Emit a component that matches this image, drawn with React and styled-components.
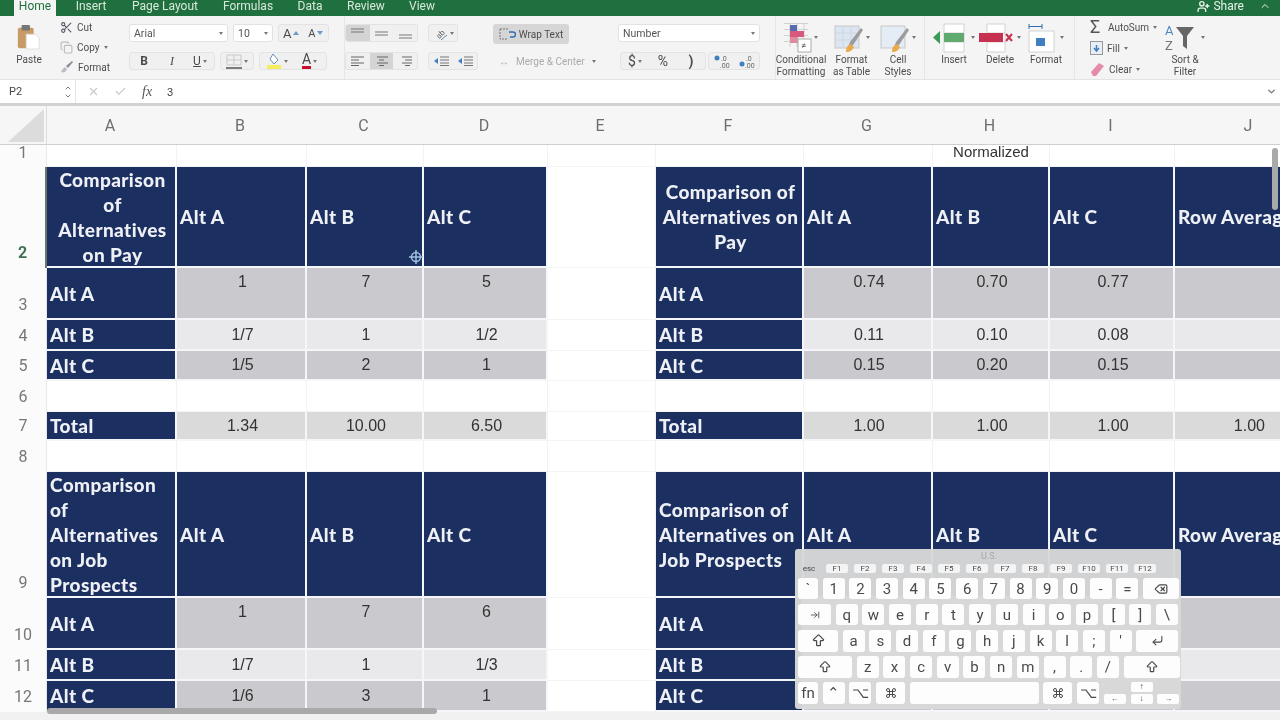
import React from 'react';
import styled, { createGlobalStyle } from 'styled-components';
import { Scissors, Copy, ChevronUp, ChevronDown, X, Check, UserPlus, Delete, Command, ArrowBigUp, CornerDownLeft, ArrowRightToLine } from 'lucide-react';

const Global = createGlobalStyle`
    html, body { margin: 0; padding: 0; background: #fff; overflow: hidden; }
    * { box-sizing: border-box; }
`;

const Page = styled.div`
    position: relative;
    width: 1280px;
    height: 720px;
    overflow: hidden;
    background: #f1f1f1;
    font-family: 'Liberation Sans', Arial, sans-serif;
    filter: blur(0.45px);
`;

/* top tabs */
const TabBar = styled.div`
    height: 16px;
    background: #20703f;
    display: flex;
    align-items: flex-start;
    font-family: Roboto, 'Liberation Sans', sans-serif;
    font-size: 12px;
    line-height: 12px;
    color: #d9e8dd;
`;
const Tab = styled.div`
    width: ${(p) => p.$w}px;
    margin-left: ${(p) => p.$ml}px;
    height: 16px;
    text-align: center;
    background: ${(p) => (p.$active ? '#f4f4f4' : 'transparent')};
    color: ${(p) => (p.$active ? '#20703f' : 'inherit')};
`;
const Share = styled.div`
    margin-left: auto;
    margin-right: 9px;
    display: flex;
    align-items: center;
    height: 12px;
    gap: 3px;
    color: #e8f1ea;
`;

/* ribbon */
const Ribbon = styled.div`
    height: 64px;
    display: flex;
    background: #f4f4f4;
    border-bottom: 1px solid #e4e4e4;
    font-family: Roboto, 'Liberation Sans', sans-serif;
    font-size: 10px;
    color: #4d4d4d;
`;
const Section = styled.div`
    width: ${(p) => p.$w}px;
    flex: none;
    display: flex;
    flex-direction: ${(p) => (p.$row ? 'row' : 'column')};
    padding-left: ${(p) => p.$pl || 0}px;
    padding-top: ${(p) => (p.$row ? 0 : 8)}px;
    gap: ${(p) => (p.$row ? 0 : 10)}px;
    border-right: ${(p) => (p.$sep ? '1px solid #e6e6e6' : 'none')};
`;
const Line = styled.div`
    display: flex;
    height: 18px;
    gap: ${(p) => p.$gap ?? 5}px;
    align-items: stretch;
`;
const Field = styled.div`
    width: ${(p) => p.$w}px;
    background: #fff;
    border: 1px solid #e2e2e2;
    border-radius: 3px;
    display: flex;
    align-items: center;
    justify-content: space-between;
    padding: 0 4px;
    font-size: 10.5px;
    color: #555;
`;
const Caret = styled.span`
    width: 0;
    height: 0;
    flex: none;
    border-left: 2px solid transparent;
    border-right: 2px solid transparent;
    border-top: 3px solid #777;
`;
const SizeTri = styled.span`
    width: 0;
    height: 0;
    flex: none;
    border-left: 3px solid transparent;
    border-right: 3px solid transparent;
    border-top: ${(p) => (p.$up ? 'none' : '4px solid #6d98c7')};
    border-bottom: ${(p) => (p.$up ? '4px solid #6d98c7' : 'none')};
`;
const Group = styled.div`
    width: ${(p) => p.$w}px;
    flex: none;
    margin-left: ${(p) => p.$ml || 0}px;
    display: flex;
    background: #f0f0f0;
    border: 1px solid #e3e3e3;
    border-radius: 3px;
    overflow: hidden;
`;
const GroupBtn = styled.div`
    flex: 1;
    display: flex;
    align-items: center;
    justify-content: center;
    gap: 2px;
    font-size: ${(p) => p.$fs || 12}px;
    color: #4a4a4a;
    background: ${(p) => (p.$on ? '#d4d4d4' : 'transparent')};
`;
const BoldBtn = styled(GroupBtn)`
    font-weight: 700;
`;
const ItalicBtn = styled(GroupBtn)`
    font-style: italic;
    font-family: 'Liberation Serif', serif;
`;
const UnderBtn = styled(GroupBtn)`
    text-decoration: underline;
`;
const ColorA = styled.span`
    border-bottom: 4px solid #c8102e;
    line-height: 13px;
    font-size: 14px;
`;
const Clip = styled.div`
    display: flex;
    flex-direction: column;
    align-items: center;
    width: 36px;
    margin-left: 11px;
    padding-top: 8px;
`;
const ClipLabel = styled.div`
    margin-top: 4px;
    font-size: 10px;
    line-height: 12px;
`;
const ClipList = styled.div`
    display: flex;
    flex-direction: column;
    margin-left: ${(p) => p.$ml ?? 13}px;
    padding-top: 4px;
    gap: ${(p) => p.$gap ?? 6}px;
`;
const ClipRow = styled.div`
    display: flex;
    align-items: center;
    height: 14px;
    gap: 4px;
    white-space: nowrap;
`;
const Sigma = styled.span`
    width: 14px;
    font-size: 18px;
    line-height: 14px;
    color: #555;
`;
const Wrap = styled.div`
    width: 76px;
    height: 20px;
    background: #d6d6d6;
    border-radius: 3px;
    display: flex;
    align-items: center;
    justify-content: center;
    gap: 3px;
    font-size: 10px;
`;
const Merge = styled.div`
    height: 18px;
    display: flex;
    align-items: center;
    gap: 7px;
    margin-left: 6px;
    margin-top: -2px;
    font-size: 10px;
    color: #ababab;
`;
const Big = styled.div`
    width: ${(p) => p.$w}px;
    flex: none;
    display: flex;
    flex-direction: column;
    align-items: center;
    padding-top: 5px;
`;
const BigIcon = styled.div`
    height: 33px;
    display: flex;
    align-items: center;
    gap: 2px;
`;
const BigLabel = styled.div`
    text-align: center;
    font-size: 10px;
    line-height: 12px;
    white-space: nowrap;
`;

/* formula bar */
const FormulaBar = styled.div`
    height: 26px;
    display: flex;
    align-items: center;
    background: #fff;
    border-bottom: 3px solid #d2d2d2;
    font-size: 11px;
    color: #444;
`;
const NameBox = styled.div`
    width: 76px;
    height: 100%;
    padding-left: 9px;
    display: flex;
    align-items: center;
    justify-content: space-between;
    padding-right: 3px;
    border-right: 1px solid #e4e4e4;
    font-family: Roboto, sans-serif;
`;
const Stepper = styled.div`
    display: flex;
    flex-direction: column;
    color: #777;
`;
const FormulaIcons = styled.div`
    width: 91px;
    height: 16px;
    display: flex;
    align-items: center;
    padding-left: 11px;
    gap: 14px;
    color: #c7c7c7;
`;
const Fx = styled.span`
    font-family: 'Liberation Serif', serif;
    font-style: italic;
    font-size: 14px;
    color: #555;
    margin-left: 1px;
`;
const FormulaValue = styled.div`
    flex: 1;
    display: flex;
    justify-content: space-between;
    align-items: center;
    padding-right: 3px;
`;

/* sheet */
const columns = [47, 130, 130, 117, 124, 108, 148, 129, 117, 125, 150];

const Sheet = styled.div`
    display: grid;
    grid-template-columns: ${columns.map((c) => c + 'px').join(' ')};
    grid-template-rows: ${(p) => p.$rows};
    height: 614px;
    overflow: hidden;
`;
const Corner = styled.div`
    background: #f6f6f6;
    border-bottom: 1px solid #cfcfcf;
    border-right: 1px solid #dcdcdc;
    display: flex;
    justify-content: flex-end;
    padding: 3px 2px 2px 0;
`;
const ColHead = styled.div`
    background: #f6f6f6;
    border-bottom: 1px solid #cfcfcf;
    display: flex;
    align-items: center;
    justify-content: center;
    padding-right: 4px;
    font-family: Roboto, sans-serif;
    font-size: 16px;
    color: #6e6e6e;
`;
const RowHead = styled.div`
    display: flex;
    align-items: ${(p) => (p.$top ? 'flex-start' : 'flex-end')};
    justify-content: center;
    line-height: 16px;
    padding-bottom: ${(p) => (p.$top ? 0 : 7)}px;
    font-family: Roboto, sans-serif;
    font-size: 16px;
    color: ${(p) => (p.$active ? '#3f7353' : '#777')};
    font-weight: ${(p) => (p.$active ? 700 : 400)};
    background: #fbfbfb;
    border-right: ${(p) => (p.$active ? '2px solid #66786c' : '1px solid #e9e9e9')};
`;
const cellBg = { navy: '#1b2f60', gray: '#cacace', light: '#e9e9ec', total: '#dadadb', blank: '#fff' };
const Cell = styled.div`
    display: flex;
    position: relative;
    white-space: pre-line;
    background: ${(p) => cellBg[p.$k]};
    border-right: ${(p) => (p.$k === 'blank' ? '1px solid #f2f2f2' : '2px solid #f4f6fa')};
    border-bottom: ${(p) => (p.$k === 'blank' ? '1px solid #f4f4f4' : '2px solid #f4f6fa')};
`;
const Head = styled(Cell)`
    align-items: center;
    justify-content: ${(p) => (p.$center ? 'center' : 'flex-start')};
    text-align: ${(p) => (p.$center ? 'center' : 'left')};
    padding-left: 3px;
    font-family: Lato, 'Open Sans', sans-serif;
    font-weight: 900;
    font-size: 19px;
    letter-spacing: 0.4px;
    line-height: 25px;
    color: #eef0f5;
    white-space: pre-line;
`;
const Num = styled(Cell)`
    justify-content: ${(p) => (p.$right ? 'flex-end' : 'center')};
    align-items: ${(p) => (p.$top ? 'flex-start' : 'center')};
    padding-top: ${(p) => (p.$top ? 5 : 0)}px;
    padding-right: ${(p) => (p.$right ? 58 : 0)}px;
    padding-left: 3px;
    font-size: 16px;
    color: #333;
`;
const Floating = styled.div`
    position: absolute;
    top: 0;
    left: 50%;
    transform: translate(-50%, -1px);
    font-size: 15px;
    line-height: 16px;
    color: #333;
    white-space: nowrap;
`;

const Thumb = styled.div`
    position: absolute;
    background: #a9a9a9;
    border-radius: 3px;
`;
const VThumb = styled(Thumb)`
    right: 2px;
    top: 148px;
    width: 6px;
    height: 62px;
`;
const HThumb = styled(Thumb)`
    left: 47px;
    bottom: 6px;
    width: 390px;
    height: 6px;
`;
const CursorMark = styled.div`
    position: absolute;
    left: 409px;
    top: 250px;
    width: 14px;
    height: 14px;
`;

/* on-screen keyboard */
const Keyboard = styled.div`
    position: absolute;
    left: 795px;
    top: 549px;
    width: 386px;
    height: 160px;
    padding: 0 1px 0 3px;
    background: rgba(216, 216, 216, 0.97);
    border-radius: 3px;
    display: flex;
    flex-direction: column;
    font-family: Roboto, 'Liberation Sans', sans-serif;
    color: #4a4a4a;
`;
const KbTitle = styled.div`
    height: 14px;
    line-height: 14px;
    text-align: center;
    font-size: 9px;
    color: #a8a8a8;
`;
const FnRow = styled.div`
    display: flex;
    height: 9px;
    gap: 6px;
    margin-top: 1px;
    margin-bottom: 5px;
`;
const FnKey = styled.div`
    width: 22px;
    height: 9px;
    background: ${(p) => (p.$plain ? 'transparent' : '#f4f4f4')};
    border-radius: 2px;
    font-size: 8px;
    line-height: 9px;
    text-align: center;
`;
const KeyRow = styled.div`
    display: flex;
    gap: 4.7px;
    height: 22px;
    margin-bottom: 4.7px;
`;
const Key = styled.div`
    width: ${(p) => p.$w || 22}px;
    flex: none;
    height: 100%;
    background: #fdfdfd;
    border-radius: 3px;
    display: flex;
    align-items: center;
    justify-content: center;
    font-size: 15px;
`;
const ArrowCol = styled.div`
    width: 22px;
    flex: none;
    display: flex;
    flex-direction: column;
    justify-content: ${(p) => (p.$low ? 'flex-end' : 'space-between')};
    gap: 2px;
`;
const ArrowKey = styled.div`
    height: 10px;
    background: #fdfdfd;
    border-radius: 2px;
    display: flex;
    align-items: center;
    justify-content: center;
    font-size: 8px;
    line-height: 10px;
`;

/* ribbon drawings */
const PasteIcon = () => (
    <svg width="24" height="26" viewBox="0 0 24 28">
        <rect x="0" y="4" width="17" height="22" rx="2" fill="#c89a66" />
        <rect x="4" y="1" width="9" height="6" rx="1" fill="#777" />
        <path d="M9 11h10l4 4v12H9z" fill="#fff" stroke="#ddd" />
    </svg>
);
const BrushIcon = () => (
    <svg width="14" height="14" viewBox="0 0 14 14">
        <path d="M1 12c3 1 5 0 6-3L5 7c-2 1-3 3-4 5z" fill="#b9bec6" />
        <path d="M6 6l6-5 1 1-5 6z" fill="#8a8f98" />
    </svg>
);
const WrapIcon = () => (
    <svg width="17" height="12" viewBox="0 0 17 12" fill="none">
        <path d="M1 1h9M1 1v10h7" stroke="#777" strokeDasharray="2 1" />
        <path d="M10 4h4a2 2 0 0 1 0 5h-3" stroke="#2f6fae" strokeWidth="1.4" />
    </svg>
);
const FillIcon = () => (
    <svg width="16" height="17" viewBox="0 0 16 17">
        <path d="M7 1l5 6-4 4-4-5z" fill="#fff" stroke="#6a8db5" />
        <rect x="1" y="12" width="14" height="5" fill="#f4ee5e" />
    </svg>
);
const BorderIcon = () => (
    <svg width="16" height="15" viewBox="0 0 16 15" fill="none" stroke="#c9c9c9">
        <path d="M1 1h14v10H1zM8 1v10M1 6h14" />
        <path d="M0 14h16" stroke="#555" strokeWidth="1.5" />
    </svg>
);
const Lines = ({ kind }) => {
    const x = kind === 'right' ? [3, 6, 3] : kind === 'center' ? [2, 4, 2] : [0, 0, 0];
    return (
        <svg width="13" height="10" viewBox="0 0 13 10" stroke="#666">
            <path d={`M${x[0]} 1h${13 - x[0]}M${x[1]} 4h${kind === 'left' ? 8 : kind === 'center' ? 5 : 7}M${x[2]} 7h${13 - x[2]}M${x[1]} 9.5h${kind === 'left' ? 8 : 5}`} />
        </svg>
    );
};
const Valign = ({ y }) => (
    <svg width="13" height="14" viewBox="0 0 13 14" stroke="#777">
        <path d={`M0 ${y}h13M0 ${y + 3}h13`} />
    </svg>
);
const Orient = () => (
    <svg width="15" height="15" viewBox="0 0 15 15" fill="none">
        <text x="2" y="11" fontSize="8" fill="#666" fontFamily="Roboto" transform="rotate(-45 7 7)">ab</text>
        <path d="M8 14l6-5" stroke="#5d86b5" />
    </svg>
);
const Indent = () => (
    <svg width="15" height="10" viewBox="0 0 15 10">
        <path d="M0 5l4-3v6z" fill="#3f7fc0" />
        <path d="M6 1h9M6 4h9M6 7h9M6 9.500h9" stroke="#777" />
    </svg>
);
const Decimal = ({ flip }) => (
    <svg width="18" height="15" viewBox="0 0 18 15">
        <circle cx="4" cy="4" r="2.500" fill="#3f7fc0" transform={flip ? 'translate(0 6)' : undefined} />
        <text x="8" y="7" fontSize="7" fill="#666" fontFamily="Roboto">.0</text>
        <text x="7" y="14" fontSize="7" fill="#666" fontFamily="Roboto">.00</text>
    </svg>
);
const CondIcon = () => (
    <svg width="28" height="30" viewBox="0 0 28 30">
        <path d="M0 .5h24M0 6.500h24M0 12.500h24M0 18.500h24M6 0v24M13 0v24M20 0v24" stroke="#d0d0d0" />
        <rect x="6" y="2" width="7" height="11" fill="#5a6bb0" />
        <rect x="6" y="8" width="14" height="6" fill="#d85a7a" />
        <rect x="6" y="14" width="8" height="6" fill="#e08aa0" />
        <rect x="14" y="16" width="13" height="13" fill="#fff" stroke="#aaa" />
        <text x="17" y="26" fontSize="9" fill="#555" fontFamily="Roboto">≠</text>
    </svg>
);
const TableIcon = ({ grid }) => (
    <svg width="30" height="30" viewBox="0 0 30 30">
        <rect x="1" y="3" width="24" height="22" fill={grid ? '#dbe6f2' : '#e4ecf5'} stroke="#c8c8c8" />
        {grid && <path d="M9 3v22M17 3v22M1 10h24M1 17h24" stroke="#cfd8e2" />}
        <path d="M13 27l3-8 11-14 2 2-10 15z" fill="#9b9b9b" />
        <path d="M12 29c0-5 2-7 5-8l3 3c-2 4-4 5-8 5z" fill="#e8a94a" />
    </svg>
);
const InsertIcon = () => (
    <svg width="36" height="30" viewBox="0 0 36 30">
        <path d="M11 1h20v28H11zM11 10h20M11 19h20" fill="#fff" stroke="#d2d2d2" />
        <rect x="11" y="10" width="20" height="9" fill="#5eaa6f" />
        <path d="M0 14.500L7 8v13z" fill="#3b9a55" />
    </svg>
);
const DeleteIcon = () => (
    <svg width="36" height="30" viewBox="0 0 36 30">
        <path d="M8 1h18v28H8zM8 10h18M8 19h18" fill="#fff" stroke="#d2d2d2" />
        <rect x="0" y="10" width="24" height="9" fill="#c8304f" />
        <path d="M27 11l6 7M33 11l-6 7" stroke="#c8304f" strokeWidth="2" />
    </svg>
);
const FormatIcon = () => (
    <svg width="30" height="30" viewBox="0 0 30 30">
        <path d="M1 1v5M14 1v5M1 3.500h13" stroke="#2f6fae" />
        <rect x="1" y="8" width="25" height="21" fill="#fff" stroke="#d2d2d2" />
        <rect x="8" y="15" width="9" height="8" fill="#3f7fc0" />
    </svg>
);
const FillDown = () => (
    <svg width="13" height="14" viewBox="0 0 13 14">
        <rect x=".5" y=".5" width="12" height="13" fill="#e8eef5" stroke="#999" />
        <path d="M6.500 4v5M4 7l2.500 3L9 7" stroke="#3f7fc0" strokeWidth="1.500" fill="none" />
    </svg>
);
const Eraser = () => (
    <svg width="15" height="15" viewBox="0 0 15 15">
        <path d="M1 10l8-9 5 3-8 10H3z" fill="#e58aa8" />
    </svg>
);
const SortIcon = () => (
    <svg width="34" height="30" viewBox="0 0 34 30">
        <text x="0" y="12" fontSize="13" fill="#4a86c5" fontFamily="Roboto">A</text>
        <text x="0" y="27" fontSize="13" fill="#777" fontFamily="Roboto">Z</text>
        <path d="M11 4h18l-7 9v13l-4-3V13z" fill="#666" />
    </svg>
);

const kbRows = [
    [['`', 20], ...'1234567890-='.split('').map((c) => [c]), [<Delete size={14} key="d" />, 36]],
    [[<ArrowRightToLine size={10} key="t" />, 33], ...'qwertyuiop[]'.split('').map((c) => [c]), ['\\', 22]],
    [[<ArrowBigUp size={15} key="c" />, 40], ...['a', 's', 'd', 'f', 'g', 'h', 'j', 'k', 'l', ';', "'"].map((c) => [c]), [<CornerDownLeft size={13} key="r" />, 42]],
    [[<ArrowBigUp size={14} key="s" />, 54], ...'zxcvbnm,./'.split('').map((c) => [c]), [<ArrowBigUp size={14} key="s2" />, 56.5]],
];

const fnKeys = ['F1', 'F2', 'F3', 'F4', 'F5', 'F6', 'F7', 'F8', 'F9', 'F10', 'F11', 'F12'];

const blank = { k: 'blank' };
const tableRow = (label, vals, kind, top, right) => [
    { k: 'navy', t: label },
    ...vals.slice(0, 3).map((t) => ({ k: kind, t, top })),
    blank,
    { k: 'navy', t: label },
    ...vals.slice(3, 6).map((t) => ({ k: kind, t, top })),
    { k: kind, t: vals[6], top, right },
];
const headRow = (left, leftCenter, right, rightCenter) => [
    { k: 'navy', t: left, center: leftCenter },
    { k: 'navy', t: 'Alt A' },
    { k: 'navy', t: 'Alt B' },
    { k: 'navy', t: 'Alt C' },
    blank,
    { k: 'navy', t: right, center: rightCenter },
    { k: 'navy', t: 'Alt A' },
    { k: 'navy', t: 'Alt B' },
    { k: 'navy', t: 'Alt C' },
    { k: 'navy', t: 'Row Average' },
];
const emptyRow = Array(10).fill(blank);

const rows = [
    { n: 1, h: 22, top: true, cells: emptyRow.map((c, i) => (i === 7 ? { ...c, float: 'Normalized' } : c)) },
    { n: 2, h: 101, active: true, cells: headRow('Comparison\nof\nAlternatives\non Pay', true, 'Comparison of\nAlternatives on\nPay', true) },
    { n: 3, h: 52, cells: tableRow('Alt A', ['1', '7', '5', '0.74', '0.70', '0.77', ''], 'gray', true) },
    { n: 4, h: 31, cells: tableRow('Alt B', ['1/7', '1', '1/2', '0.11', '0.10', '0.08', ''], 'light') },
    { n: 5, h: 30, cells: tableRow('Alt C', ['1/5', '2', '1', '0.15', '0.20', '0.15', ''], 'gray') },
    { n: 6, h: 31, cells: emptyRow },
    { n: 7, h: 29, cells: tableRow('Total', ['1.34', '10.00', '6.50', '1.00', '1.00', '1.00', '1.00'], 'total', false, true) },
    { n: 8, h: 31, cells: emptyRow },
    { n: 9, h: 126, cells: headRow('Comparison\nof\nAlternatives\non Job\nProspects', false, 'Comparison of\nAlternatives on\nJob Prospects', false) },
    { n: 10, h: 52, cells: tableRow('Alt A', ['1', '7', '6', '', '', '', ''], 'gray', true) },
    { n: 11, h: 31, cells: tableRow('Alt B', ['1/7', '1', '1/3', '', '', '', ''], 'light') },
    { n: 12, h: 31, cells: tableRow('Alt C', ['1/6', '3', '1', '', '', '', ''], 'gray') },
];
const rowTemplate = ['39px', ...rows.map((r) => r.h + 'px'), '1fr'].join(' ');

const tabs = [
    ['Home', 42, 14],
    ['Insert', 38, 16],
    ['Page Layout', 66, 22],
    ['Formulas', 52, 24],
    ['Data', 28, 22],
    ['Review', 40, 22],
    ['View', 30, 21],
];

function SheetCell({ cell }) {
    if (cell.k === 'navy') {
        return (
            <Head $k="navy" $center={cell.center}>
                {cell.t}
            </Head>
        );
    }
    if (cell.k === 'blank') {
        return <Cell $k="blank">{cell.float && <Floating>{cell.float}</Floating>}</Cell>;
    }
    return (
        <Num $k={cell.k} $top={cell.top} $right={cell.right}>
            {cell.t}
        </Num>
    );
}

function App() {
    return (
        <Page>
            <Global />
            <TabBar>
                {tabs.map(([t, w, ml], i) => (
                    <Tab key={t} $w={w} $ml={ml} $active={i === 0}>
                        {t}
                    </Tab>
                ))}
                <Share>
                    <UserPlus size={13} strokeWidth={2.5} />
                    <span>Share</span>
                    <ChevronUp size={12} style={{ marginLeft: 12 }} />
                </Share>
            </TabBar>

            <Ribbon>
                <Section $w={129} $row>
                    <Clip>
                        <PasteIcon />
                        <ClipLabel>Paste</ClipLabel>
                    </Clip>
                    <ClipList>
                        <ClipRow>
                            <Scissors size={13} color="#556" />
                            Cut
                        </ClipRow>
                        <ClipRow>
                            <Copy size={13} color="#bbb" />
                            Copy <Caret />
                        </ClipRow>
                        <ClipRow>
                            <BrushIcon />
                            Format
                        </ClipRow>
                    </ClipList>
                </Section>

                <Section $w={216} $sep>
                    <Line>
                        <Field $w={99}>
                            Arial <Caret />
                        </Field>
                        <Field $w={40}>
                            10 <Caret />
                        </Field>
                        <Group $w={51}>
                            <GroupBtn $fs={13}>
                                A<SizeTri $up />
                            </GroupBtn>
                            <GroupBtn $fs={11}>
                                A<SizeTri />
                            </GroupBtn>
                        </Group>
                    </Line>
                    <Line>
                        <Group $w={86}>
                            <BoldBtn>B</BoldBtn>
                            <ItalicBtn>I</ItalicBtn>
                            <UnderBtn>
                                U <Caret />
                            </UnderBtn>
                        </Group>
                        <Group $w={34}>
                            <GroupBtn>
                                <BorderIcon /> <Caret />
                            </GroupBtn>
                        </Group>
                        <Group $w={68}>
                            <GroupBtn>
                                <FillIcon /> <Caret />
                            </GroupBtn>
                            <GroupBtn>
                                <ColorA>A</ColorA> <Caret />
                            </GroupBtn>
                        </Group>
                    </Line>
                </Section>

                <Section $w={148}>
                    <Line $gap={10}>
                        <Group $w={73}>
                            <GroupBtn $on>
                                <Valign y={3} />
                            </GroupBtn>
                            <GroupBtn>
                                <Valign y={6} />
                            </GroupBtn>
                            <GroupBtn>
                                <Valign y={9} />
                            </GroupBtn>
                        </Group>
                        <Group $w={30}>
                            <GroupBtn>
                                <Orient /> <Caret />
                            </GroupBtn>
                        </Group>
                    </Line>
                    <Line $gap={10}>
                        <Group $w={73}>
                            <GroupBtn>
                                <Lines kind="left" />
                            </GroupBtn>
                            <GroupBtn $on>
                                <Lines kind="center" />
                            </GroupBtn>
                            <GroupBtn>
                                <Lines kind="right" />
                            </GroupBtn>
                        </Group>
                        <Group $w={50}>
                            <GroupBtn>
                                <Indent />
                            </GroupBtn>
                            <GroupBtn>
                                <Indent />
                            </GroupBtn>
                        </Group>
                    </Line>
                </Section>

                <Section $w={125}>
                    <Wrap>
                        <WrapIcon />
                        Wrap Text
                    </Wrap>
                    <Merge>
                        <span>↔</span>
                        Merge &amp; Center
                        <Caret />
                    </Merge>
                </Section>

                <Section $w={158} $sep>
                    <Line>
                        <Field $w={142}>
                            Number <Caret />
                        </Field>
                    </Line>
                    <Line $gap={2}>
                        <Group $w={86} $ml={2}>
                            <GroupBtn $fs={14}>
                                $ <Caret />
                            </GroupBtn>
                            <GroupBtn $fs={14}>%</GroupBtn>
                            <BoldBtn $fs={14}>)</BoldBtn>
                        </Group>
                        <Group $w={52}>
                            <GroupBtn>
                                <Decimal />
                            </GroupBtn>
                            <GroupBtn>
                                <Decimal flip />
                            </GroupBtn>
                        </Group>
                    </Line>
                </Section>

                <Section $w={149} $row $sep>
                    <Big $w={50}>
                        <BigIcon>
                            <CondIcon />
                            <Caret />
                        </BigIcon>
                        <BigLabel>
                            Conditional
                            <br />
                            Formatting
                        </BigLabel>
                    </Big>
                    <Big $w={51}>
                        <BigIcon>
                            <TableIcon grid />
                            <Caret />
                        </BigIcon>
                        <BigLabel>
                            Format
                            <br />
                            as Table
                        </BigLabel>
                    </Big>
                    <Big $w={42}>
                        <BigIcon>
                            <TableIcon />
                            <Caret />
                        </BigIcon>
                        <BigLabel>
                            Cell
                            <br />
                            Styles
                        </BigLabel>
                    </Big>
                </Section>

                <Section $w={150} $row $sep $pl={6}>
                    <Big $w={46}>
                        <BigIcon>
                            <InsertIcon />
                            <Caret />
                        </BigIcon>
                        <BigLabel>Insert</BigLabel>
                    </Big>
                    <Big $w={46}>
                        <BigIcon>
                            <DeleteIcon />
                            <Caret />
                        </BigIcon>
                        <BigLabel>Delete</BigLabel>
                    </Big>
                    <Big $w={46}>
                        <BigIcon>
                            <FormatIcon />
                            <Caret />
                        </BigIcon>
                        <BigLabel>Format</BigLabel>
                    </Big>
                </Section>

                <Section $w={85} $row $pl={15}>
                    <ClipList $ml={0} $gap={7}>
                        <ClipRow>
                            <Sigma>Σ</Sigma>
                            AutoSum <Caret />
                        </ClipRow>
                        <ClipRow>
                            <FillDown />
                            Fill <Caret />
                        </ClipRow>
                        <ClipRow>
                            <Eraser />
                            Clear <Caret />
                        </ClipRow>
                    </ClipList>
                </Section>

                <Big $w={50}>
                    <BigIcon>
                        <SortIcon />
                        <Caret />
                    </BigIcon>
                    <BigLabel>
                        Sort &amp;
                        <br />
                        Filter
                    </BigLabel>
                </Big>
            </Ribbon>

            <FormulaBar>
                <NameBox>
                    P2
                    <Stepper>
                        <ChevronUp size={8} strokeWidth={3} />
                        <ChevronDown size={8} strokeWidth={3} />
                    </Stepper>
                </NameBox>
                <FormulaIcons>
                    <X size={13} />
                    <Check size={13} />
                    <Fx>fx</Fx>
                </FormulaIcons>
                <FormulaValue>
                    3
                    <ChevronDown size={11} color="#777" strokeWidth={3} />
                </FormulaValue>
            </FormulaBar>

            <Sheet $rows={rowTemplate}>
                <Corner>
                    <svg width="36" height="33" viewBox="0 0 36 33">
                        <path d="M36 0v33H0z" fill="#dcdcdc" />
                    </svg>
                </Corner>
                {'ABCDEFGHIJ'.split('').map((c) => (
                    <ColHead key={c}>{c}</ColHead>
                ))}
                {rows.map((r) => (
                    <React.Fragment key={r.n}>
                        <RowHead $active={r.active} $top={r.top}>
                            {r.n}
                        </RowHead>
                        {r.cells.map((cell, i) => (
                            <SheetCell cell={cell} key={i} />
                        ))}
                    </React.Fragment>
                ))}
            </Sheet>

            <VThumb />
            <HThumb />
            <CursorMark>
                <svg width="14" height="14" viewBox="0 0 14 14" fill="none" stroke="#9cc0de" strokeWidth="1.500">
                    <circle cx="7" cy="7" r="4.500" />
                    <path d="M7 0v14M0 7h14" />
                </svg>
            </CursorMark>

            <Keyboard>
                <KbTitle>U.S.</KbTitle>
                <FnRow>
                    <FnKey $plain>esc</FnKey>
                    {fnKeys.map((f) => (
                        <FnKey key={f}>{f}</FnKey>
                    ))}
                </FnRow>
                {kbRows.map((row, i) => (
                    <KeyRow key={i}>
                        {row.map(([label, w], j) => (
                            <Key key={j} $w={w}>
                                {label}
                            </Key>
                        ))}
                    </KeyRow>
                ))}
                <KeyRow>
                    <Key $w={20}>fn</Key>
                    <Key>⌃</Key>
                    <Key>⌥</Key>
                    <Key $w={29}>
                        <Command size={12} />
                    </Key>
                    <Key $w={129} />
                    <Key $w={29}>
                        <Command size={12} />
                    </Key>
                    <Key>⌥</Key>
                    <ArrowCol $low>
                        <ArrowKey>←</ArrowKey>
                    </ArrowCol>
                    <ArrowCol>
                        <ArrowKey>↑</ArrowKey>
                        <ArrowKey>↓</ArrowKey>
                    </ArrowCol>
                    <ArrowCol $low>
                        <ArrowKey>→</ArrowKey>
                    </ArrowCol>
                </KeyRow>
            </Keyboard>
        </Page>
    );
}

export default App;
